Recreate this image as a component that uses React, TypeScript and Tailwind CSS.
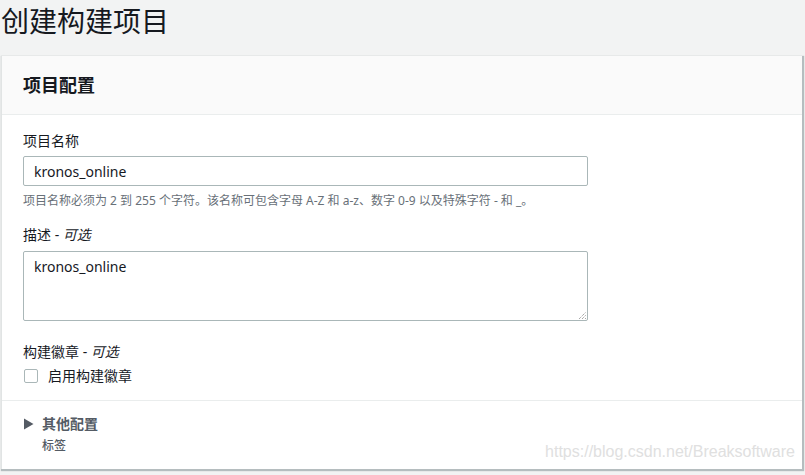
const font = {
  fontFamily: '"Noto Sans", "Noto Sans CJK SC", sans-serif',
};

export default function App() {
  return (
    <div
      className="w-[805px] h-[475px] bg-[#f2f3f3] text-[#16191f] overflow-hidden"
      style={font}
    >
      <h1 className="h-[56px] pl-[1px] pt-[2px] text-[28px] leading-[38px] font-normal text-[#16191f]">
        创建构建项目
      </h1>
      <div className="ml-px mr-[3px] bg-white border-l border-[#e1e4e4] shadow-[1px_1px_1px_1px_rgba(0,28,36,0.25)] relative">
        <div className="h-[59px] bg-[#fafafa] border-b border-[#eaeded] px-[21px] flex items-center">
          <h2 className="text-[18px] font-bold text-[#16191f]">项目配置</h2>
        </div>
        <div className="px-[21px] pt-[16px] pb-[14px]">
          <div className="text-[14px] leading-[20px] text-[#16191f]">项目名称</div>
          <div className="mt-[5px] w-[565px] h-[30px] border border-[#aab7b8] rounded-[2px] flex items-center px-[10px] text-[14px]">
            kronos_online
          </div>
          <div className="mt-[7px] text-[12px] leading-[16px] text-[#687078]">
            项目名称必须为 2 到 255 个字符。该名称可包含字母 A-Z 和 a-z、数字 0-9 以及特殊字符 - 和 _。
          </div>

          <div className="mt-[16px] text-[14px] leading-[20px]">
            描述 - <i>可选</i>
          </div>
          <div className="mt-[6px] w-[565px] h-[70px] border border-[#aab7b8] rounded-[2px] px-[10px] pt-[5px] text-[14px] leading-[20px] relative">
            kronos_online
            <svg
              className="absolute right-[1px] bottom-[1px]"
              width="8"
              height="8"
              viewBox="0 0 8 8"
            >
              <path d="M1 8 L8 1 M4 8 L8 4 M7 8 L8 7" stroke="#666" strokeWidth="0.8" strokeDasharray="1 1" />
            </svg>
          </div>

          <div className="mt-[21px] text-[14px] leading-[20px]">
            构建徽章 - <i>可选</i>
          </div>
          <label className="mt-[4px] flex items-center gap-[10px] text-[14px] leading-[20px]">
            <span className="w-[14px] h-[14px] border border-[#aab7b8] rounded-[2px] bg-white ml-px" />
            启用构建徽章
          </label>
        </div>
        <div className="border-t border-[#eaeded] px-[21px] pt-[13px] h-[69px] relative">
          <div className="flex items-center gap-[8px]">
            <svg width="11" height="12" viewBox="0 0 11 12">
              <path d="M1 0.5 L10.5 6 L1 11.5 Z" fill="#545b64" />
            </svg>
            <span className="text-[14px] leading-[20px] font-bold text-[#545b64]">其他配置</span>
          </div>
          <div className="mt-[4px] pl-[19px] text-[12px] leading-[16px] font-medium text-[#545b64]">标签</div>
          <div
            className="absolute right-[7px] bottom-[5px] text-[16px] text-[#e0e0e0]"
            style={{ fontFamily: '"Liberation Sans", Arial, sans-serif' }}
          >
            https://blog.csdn.net/Breaksoftware
          </div>
        </div>
      </div>
    </div>
  );
}
